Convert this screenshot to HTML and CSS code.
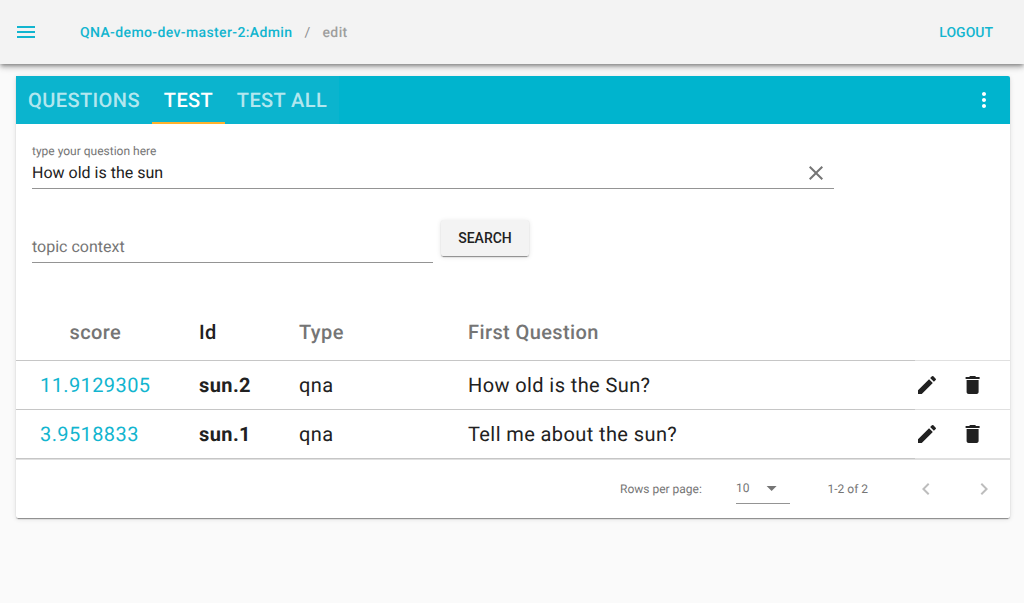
FILE: index.html
```
<!DOCTYPE html>
<html lang="en">
<head>
<meta charset="utf-8">
<title>QnABot Designer</title>
<link rel="stylesheet" href="styles.css">
</head>
<body>
<header class="app-bar">
  <svg class="icon menu" viewBox="0 0 24 24"><path d="M3 18h18v-2H3v2zm0-5h18v-2H3v2zm0-7v2h18V6H3z"/></svg>
  <nav class="crumbs"><a class="crumb-link">QNA-demo-dev-master-2:Admin</a><span class="crumb-sep">/</span><span class="crumb">edit</span></nav>
  <a class="logout">LOGOUT</a>
</header>
<main class="card">
  <div class="toolbar">
    <div class="tabs">
      <div class="tab tab-questions">QUESTIONS</div>
      <div class="tab tab-test active">TEST</div>
      <div class="tab tab-all">TEST ALL</div>
    </div>
    <svg class="icon more" viewBox="0 0 24 24"><path d="M12 8c1.1 0 2-.9 2-2s-.9-2-2-2-2 .9-2 2 .9 2 2 2zm0 2c-1.1 0-2 .9-2 2s.9 2 2 2 2-.9 2-2-.9-2-2-2zm0 6c-1.1 0-2 .9-2 2s.9 2 2 2 2-.9 2-2-.9-2-2-2z"/></svg>
  </div>
  <section class="form">
    <div class="field question">
      <div class="field-main">
        <label class="label">type your question here</label>
        <span class="value">How old is the sun</span>
      </div>
      <svg class="icon clear" viewBox="0 0 24 24"><path d="M19 6.41L17.59 5 12 10.59 6.41 5 5 6.41 10.59 12 5 17.59 6.41 19 12 13.41 17.59 19 19 17.59 13.41 12z"/></svg>
    </div>
    <div class="search-row">
      <div class="field topic"><span class="placeholder">topic context</span></div>
      <button class="button">SEARCH</button>
    </div>
  </section>
  <section class="table">
    <div class="row head">
      <div class="cell score">score</div><div class="cell id">Id</div><div class="cell type">Type</div><div class="cell first">First Question</div><div class="cell actions"></div>
    </div>
    <div class="row">
      <div class="cell score">11.9129305</div><div class="cell id">sun.2</div><div class="cell type">qna</div><div class="cell first">How old is the Sun?</div>
      <div class="cell actions">
        <svg class="icon" viewBox="0 0 24 24"><path d="M3 17.25V21h3.75L17.81 9.94l-3.75-3.75L3 17.25zM20.71 7.04a1 1 0 0 0 0-1.41l-2.34-2.34a1 1 0 0 0-1.41 0l-1.83 1.83 3.75 3.75 1.83-1.83z"/></svg>
        <svg class="icon" viewBox="0.4 0 24 24"><path d="M6 19c0 1.1.9 2 2 2h8c1.1 0 2-.9 2-2V7H6v12zM19 4h-3.5l-1-1h-5l-1 1H5v2h14V4z"/></svg>
      </div>
    </div>
    <div class="row">
      <div class="cell score">3.9518833</div><div class="cell id">sun.1</div><div class="cell type">qna</div><div class="cell first">Tell me about the sun?</div>
      <div class="cell actions">
        <svg class="icon" viewBox="0 0 24 24"><path d="M3 17.25V21h3.75L17.81 9.94l-3.75-3.75L3 17.25zM20.71 7.04a1 1 0 0 0 0-1.41l-2.34-2.34a1 1 0 0 0-1.41 0l-1.83 1.83 3.75 3.75 1.83-1.83z"/></svg>
        <svg class="icon" viewBox="0.4 0 24 24"><path d="M6 19c0 1.1.9 2 2 2h8c1.1 0 2-.9 2-2V7H6v12zM19 4h-3.5l-1-1h-5l-1 1H5v2h14V4z"/></svg>
      </div>
    </div>
  </section>
  <footer class="pager">
    <span class="pager-label">Rows per page:</span>
    <div class="select"><span>10</span><svg class="icon" viewBox="0.4 0 24 24"><path d="M7 10l5 5 5-5z"/></svg></div>
    <span class="range">1-2 of 2</span>
    <svg class="icon prev" viewBox="0 0 24 24"><path d="M15.41 7.41L14 6l-6 6 6 6 1.41-1.41L10.83 12z"/></svg>
    <svg class="icon next" viewBox="0 0 24 24"><path d="M10 6L8.59 7.41 13.17 12l-4.58 4.59L10 18l6-6z"/></svg>
  </footer>
</main>
</body>
</html>
```
FILE: styles.css
```
* { box-sizing: border-box; }
body {
  margin: 0;
  height: 603px;
  background: #fafafa;
  color: #212121;
  font-family: Roboto, "Liberation Sans", sans-serif;
  text-rendering: geometricPrecision;
  overflow: hidden;
}
.icon { width: 24px; height: 24px; flex: none; fill: currentColor; display: block; }
.app-bar {
  height: 64px;
  padding: 0 31px 0 14px;
  display: flex;
  align-items: center;
  background: #f3f3f3;
  color: #12b5cf;
  font-size: 14px;
  line-height: 18px;
  font-weight: 500;
  box-shadow: 0 2px 4px -1px rgba(0,0,0,.4), 0 4px 5px rgba(0,0,0,.14), 0 1px 10px rgba(0,0,0,.12);
}
.crumbs { display: flex; margin-left: 42px; padding-top: 2px; letter-spacing: .38px; }
.crumb-sep { width: 30px; text-align: center; font-weight: 400; color: #8f8f8f; }
.crumb { color: #9e9e9e; }
.logout { margin-left: auto; padding-top: 2px; }
.card {
  width: 994px;
  height: 442px;
  margin: 12px 0 0 16px;
  display: flex;
  flex-direction: column;
  background: #fff;
  border-radius: 2px;
  box-shadow: 0 3px 1px -2px rgba(0,0,0,.2), 0 1px 1px rgba(0,0,0,.24), 0 1px 5px rgba(0,0,0,.12);
}
.toolbar {
  height: 48px;
  padding-right: 14px;
  display: flex;
  align-items: center;
  justify-content: space-between;
  background: #00b4ce;
  color: #fff;
  border-radius: 0 2px 0 0;
}
.tabs { display: flex; height: 48px; background: #0bb4ce; }
.tab {
  height: 48px;
  line-height: 48px;
  text-align: center;
  font-size: 20px;
  font-weight: 500;
  letter-spacing: .4px;
  white-space: nowrap;
  color: rgba(255,255,255,.7);
}
.tab-questions { width: 136px; }
.tab-test { width: 73px; }
.tab-all { width: 114px; }
.tab.active { color: #fff; border-bottom: 2px solid #ffb12c; }
.form { height: 180px; padding: 16px; }
.field { display: flex; border-bottom: 1px solid #949494; }
.question { width: 802px; height: 49px; justify-content: space-between; align-items: flex-end; }
.field-main { display: flex; flex-direction: column; height: 48px; padding-top: 4px; }
.label { font-size: 12px; line-height: 14px; color: #757575; }
.value { font-size: 16px; line-height: 20px; margin-top: 5px; }
.clear { margin: 0 6px 3px 0; color: #757575; }
.search-row { display: flex; margin-top: 31px; }
.topic { width: 401px; height: 43px; }
.placeholder { font-size: 16px; line-height: 20px; margin-top: 17px; color: #757575; }
.button {
  width: 88px;
  height: 36px;
  margin-left: 8px;
  padding: 0;
  border: 0;
  border-radius: 2px;
  background: #f3f3f3;
  color: #212121;
  font: 500 14px Roboto, "Liberation Sans", sans-serif;
  box-shadow: 0 3px 1px -2px rgba(0,0,0,.2), 0 1px 1px rgba(0,0,0,.24), 0 1px 5px rgba(0,0,0,.12);
}
.table { font-size: 20px; letter-spacing: .4px; }
.row { display: grid; grid-template-columns: 159px 100px 169px 471px 95px; height: 49px; line-height: 48px; }
.cell { padding-left: 24px; border-bottom: 1px solid #c6c6c6; white-space: nowrap; }
.score { color: #12b5cf; }
.id { font-weight: 700; }
.head { height: 57px; line-height: 56px; font-weight: 500; color: #757575; }
.head .score { color: #757575; padding-left: 53.5px; }
.head .id { color: #212121; font-weight: 500; }
.cell.actions { display: flex; align-items: center; gap: 22px; padding-left: 0; border-bottom-color: #e0e0e0; }
.pager {
  height: 59px;
  display: flex;
  align-items: center;
  padding: 0 14px 0 604px;
  border-top: 1px solid #e0e0e0;
  color: #757575;
  font-size: 12px;
}
.pager-label { width: 116px; }
.select { display: flex; width: 54px; height: 30px; align-items: center; gap: 10px; padding-bottom: 1px; border-bottom: 1px solid #949494; }
.range { margin-left: 37.5px; width: 86.5px; }
.prev, .next { color: #bdbdbd; }
.next { margin-left: 34px; }
```
